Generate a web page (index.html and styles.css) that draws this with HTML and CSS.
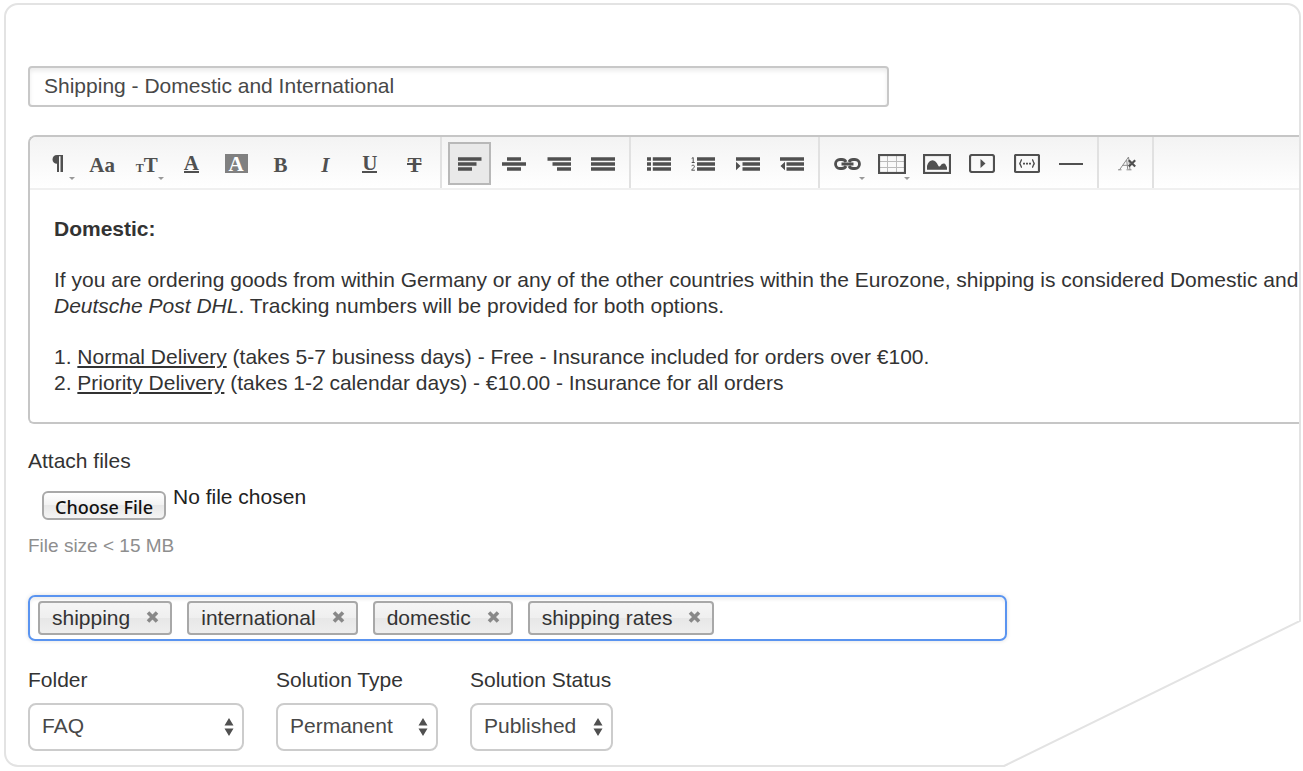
FILE: index.html
```html
<!DOCTYPE html>
<html lang="en">
<head>
<meta charset="utf-8">
<meta name="viewport" content="width=device-width, initial-scale=1">
<title>Edit solution</title>
<link rel="stylesheet" href="styles.css">
</head>
<body>
<form class="panel">
  <input class="title-input" type="text" aria-label="Title" value="Shipping - Domestic and International">

  <section class="editor">
    <div class="toolbar" role="toolbar" aria-label="Formatting">
      <div class="group group-text">
        <button type="button" class="tool has-menu" aria-label="Paragraph"><svg width="12" height="17" viewBox="0 0 12 17"><path d="M11 0H5C2.200 0 .5 1.900 .5 4.500S2.400 8.700 5 8.700V17h2V1.300h1.500V17H11z"/></svg></button>
        <button type="button" class="tool" aria-label="Font family"><span class="glyph">Aa</span></button>
        <button type="button" class="tool has-menu" aria-label="Font size"><span class="glyph"><small class="glyph-small">T</small>T</span></button>
        <button type="button" class="tool" aria-label="Text color"><span class="glyph glyph-line">A</span></button>
        <button type="button" class="tool" aria-label="Background color"><span class="glyph glyph-box">A</span></button>
        <button type="button" class="tool" aria-label="Bold"><span class="glyph">B</span></button>
        <button type="button" class="tool" aria-label="Italic"><span class="glyph glyph-italic">I</span></button>
        <button type="button" class="tool" aria-label="Underline"><span class="glyph glyph-line">U</span></button>
        <button type="button" class="tool" aria-label="Strikethrough"><span class="glyph glyph-strike">T</span></button>
      </div>
      <div class="group group-four">
        <button type="button" class="tool active" aria-label="Align left" aria-pressed="true"><svg width="24" height="14" viewBox="0 0 24 14"><path d="M0 .3h23.500v3.400H0zM0 5.300h18.500v3.400H0zM0 10.300h14v3.400H0z"/></svg></button>
        <button type="button" class="tool" aria-label="Align center"><svg width="24" height="14" viewBox="0 0 24 14"><path d="M5 .3h14v3.400H5zM0 5.300h24v3.400H0zM5 10.300h14v3.400H5z"/></svg></button>
        <button type="button" class="tool" aria-label="Align right"><svg width="24" height="14" viewBox="0 0 24 14"><path d="M.5 .3H24v3.400H.5zM5.500 5.300H24v3.400H5.500zM10 10.300h14v3.400H10z"/></svg></button>
        <button type="button" class="tool" aria-label="Justify"><svg width="24" height="14" viewBox="0 0 24 14"><path d="M0 .3h24v3.400H0zM0 5.300h24v3.400H0zM0 10.300h24v3.400H0z"/></svg></button>
      </div>
      <div class="group group-four">
        <button type="button" class="tool" aria-label="Bulleted list"><svg width="24" height="14" viewBox="0 0 24 14"><path d="M0 .3h4v3.400H0zM0 5.300h4v3.400H0zM0 10.300h4v3.400H0zM5.800 .3H24v3.400H5.800zM5.800 5.300H24v3.400H5.800zM5.800 10.300H24v3.400H5.800z"/></svg></button>
        <button type="button" class="tool" aria-label="Numbered list"><svg width="24" height="14" viewBox="0 0 24 14"><path d="M6 .3h18v3.400H6zM6 5.300h18v3.400H6zM6 10.300h18v3.400H6z"/><path class="thin" d="M.7 1.500L2.200 .5V5.500M.7 5.500h3M.5 9.200C1 7.700 3.600 7.900 3.400 9.500C3.200 10.800 1.500 11.700 .6 13.200H3.900"/></svg></button>
        <button type="button" class="tool" aria-label="Indent"><svg width="24" height="14" viewBox="0 0 24 14"><path d="M0 .3h24v3.400H0zM6.500 5.300H24v3.400H6.500zM6.500 10.300H24v3.400H6.500zM0 4.800L4.500 9 0 13.200z"/></svg></button>
        <button type="button" class="tool" aria-label="Outdent"><svg width="24" height="14" viewBox="0 0 24 14"><path d="M0 .3h24v3.400H0zM6.500 5.300H24v3.400H6.500zM6.500 10.300H24v3.400H6.500zM5 4.800L.5 9 5 13.200z"/></svg></button>
      </div>
      <div class="group group-insert">
        <button type="button" class="tool has-menu" aria-label="Link"><svg width="27" height="12" viewBox="0 0 27 12"><path class="stroke link" d="M12 4C11 2 9.500 1.500 8 1.500H6A4.500 4.500 0 0 0 6 10.500H8C9.500 10.500 11 10 12 8M15 4C16 2 17.500 1.500 19 1.500H21A4.500 4.500 0 0 1 21 10.500H19C17.500 10.500 16 10 15 8"/><path class="stroke link" d="M7.500 6H19.500"/></svg></button>
        <button type="button" class="tool has-menu" aria-label="Table"><svg width="28" height="20" viewBox="0 0 28 20"><path class="pale" d="M9.500 2V18M18.500 2V18M2 7.500H26M2 13.500H26"/><rect class="stroke" x="1" y="1" width="26" height="18"/></svg></button>
        <button type="button" class="tool" aria-label="Image"><svg width="28" height="20" viewBox="0 0 28 20"><rect class="stroke" x="1" y="1" width="26" height="18"/><path d="M4 15.800V12C5 8.500 7 6.300 9.500 6.300S13.800 8.500 15 11.200C16 13 16.500 12.500 17.500 11.800C19 9.200 22 8.700 23 11.500C23.600 13 24 12.500 24 14V15.800z"/></svg></button>
        <button type="button" class="tool" aria-label="Video"><svg width="26" height="19" viewBox="0 0 26 19"><rect class="stroke" x="1" y="1" width="24" height="17" rx="2"/><path d="M11.500 5L16.500 9.500L11.500 14z"/></svg></button>
        <button type="button" class="tool" aria-label="Code snippet"><svg width="26" height="20" viewBox="0 0 26 20"><rect class="stroke" x="1" y="1" width="24" height="17" rx="1"/><path class="mid" d="M8 5.700C6.300 5.700 7.300 9 5.300 9.500C7.300 10 6.300 13.300 8 13.300M18 5.700C19.700 5.700 18.700 9 20.700 9.500C18.700 10 19.700 13.300 18 13.300"/><path d="M9 8.700h2v1.800H9zM12 8.700h2v1.800h-2zM15 8.700h2v1.800h-2z"/></svg></button>
        <button type="button" class="tool" aria-label="Horizontal line"><svg width="24" height="2" viewBox="0 0 24 2"><path d="M0 0h24v2H0z"/></svg></button>
      </div>
      <div class="group group-clear">
        <button type="button" class="tool" aria-label="Clear formatting"><svg width="20" height="15" viewBox="0 0 20 15"><path class="outline" d="M1 13.800H4.500M2.500 13.800L11.500 1L13 13.800M9.500 13.800H14.500M6 9.300H12M9.700 4L10.700 13"/><path class="stroke" d="M11.800 4.200L18.200 10.500M18.200 4.200L11.800 10.500"/></svg></button>
      </div>
    </div>
    <div class="content">
      <p><b>Domestic:</b></p>
      <p>If you are ordering goods from within Germany or any of the other countries within the Eurozone, shipping is considered Domestic and<br><i>Deutsche Post DHL</i>. Tracking numbers will be provided for both options.</p>
      <p>1. <u>Normal Delivery</u> (takes 5-7 business days) - Free - Insurance included for orders over €100.<br>2. <u>Priority Delivery</u> (takes 1-2 calendar days) - €10.00 - Insurance for all orders</p>
    </div>
  </section>

  <div class="attach">
    <label for="file">Attach files</label>
    <div class="file-row">
      <input id="file" class="file" type="file">
      <span>No file chosen</span>
    </div>
    <p class="hint">File size &lt; 15 MB</p>
  </div>

  <div class="tags">
    <span class="tag">shipping <button type="button" class="remove" aria-label="Remove shipping"><svg width="13" height="12" viewBox="0 0 13 12"><path d="M2 1.500L11 10.500M11 1.500L2 10.500"/></svg></button></span>
    <span class="tag">international <button type="button" class="remove" aria-label="Remove international"><svg width="13" height="12" viewBox="0 0 13 12"><path d="M2 1.500L11 10.500M11 1.500L2 10.500"/></svg></button></span>
    <span class="tag">domestic <button type="button" class="remove" aria-label="Remove domestic"><svg width="13" height="12" viewBox="0 0 13 12"><path d="M2 1.500L11 10.500M11 1.500L2 10.500"/></svg></button></span>
    <span class="tag">shipping rates <button type="button" class="remove" aria-label="Remove shipping rates"><svg width="13" height="12" viewBox="0 0 13 12"><path d="M2 1.500L11 10.500M11 1.500L2 10.500"/></svg></button></span>
    <input class="tag-input" type="text" aria-label="Add tag">
  </div>

  <div class="fields">
    <div class="field field-folder">
      <label for="folder">Folder</label>
      <div class="select-wrap"><select id="folder"><option>FAQ</option></select><svg class="arrows" width="10" height="18" viewBox="0 0 10 18"><path d="M5 0L9.500 7.500H.5zM5 18L.5 10.500H9.500z"/></svg></div>
    </div>
    <div class="field field-type">
      <label for="type">Solution Type</label>
      <div class="select-wrap"><select id="type"><option>Permanent</option></select><svg class="arrows" width="10" height="18" viewBox="0 0 10 18"><path d="M5 0L9.500 7.500H.5zM5 18L.5 10.500H9.500z"/></svg></div>
    </div>
    <div class="field field-status">
      <label for="status">Solution Status</label>
      <div class="select-wrap"><select id="status"><option>Published</option></select><svg class="arrows" width="10" height="18" viewBox="0 0 10 18"><path d="M5 0L9.500 7.500H.5zM5 18L.5 10.500H9.500z"/></svg></div>
    </div>
  </div>

  <svg class="corner" width="299" height="147" viewBox="0 0 299 147" aria-hidden="true"><path class="corner-fill" d="M2 147L299 0V147z"/><path class="corner-line" d="M0 146H2L298 1V0"/></svg>
</form>
</body>
</html>
```

FILE: styles.css
```css
* {
  box-sizing: border-box;
}

body {
  margin: 0;
  padding: 3px 2px 4px 4px;
  background: #fff;
  color: #333;
  font: 21px/26px "Liberation Sans", Arial, sans-serif;
}

p {
  margin: 0;
}

input,
select,
button {
  font: inherit;
  color: inherit;
}

.panel {
  position: relative;
  padding: 61px 0 14px 22px;
  border: 2px solid #e3e3e3;
  border-radius: 14px;
}

.title-input {
  display: block;
  width: 100%;
  max-width: 861px;
  height: 41px;
  padding: 0 14px 2px;
  border: 2px solid #c8c8c8;
  border-radius: 4px;
  box-shadow: inset 0 3px 4px #ececec;
  color: #484848;
}

.editor {
  margin-top: 28px;
  border: 2px solid #c6c6c6;
  border-right: 0;
  border-radius: 8px 0 0 6px;
  overflow: hidden;
}

.toolbar {
  display: flex;
  height: 53px;
  border-bottom: 2px solid #f0f0f0;
  background: linear-gradient(#f3f3f3, #fff);
}

.group {
  display: flex;
  flex: none;
  align-items: center;
  justify-content: space-between;
  padding: 2px 4px 0 6px;
  border-right: 2px solid #e1e1e1;
}

.group-text {
  width: 412px;
}

.group-four {
  width: 189px;
}

.group-insert {
  width: 279px;
}

.tool {
  position: relative;
  display: flex;
  flex: none;
  align-items: center;
  justify-content: center;
  width: 43px;
  height: 43px;
  padding: 0;
  border: 0;
  background: none;
  color: #505050;
  fill: #505050;
}

.tool.active {
  border: 2px solid #b8b8b8;
  background: #e9e9e9;
}

.has-menu::after {
  content: "";
  position: absolute;
  right: 4px;
  bottom: 5px;
  border: 3px solid transparent;
  border-top-color: #999;
  border-bottom: 0;
}

.stroke {
  fill: none;
  stroke: #505050;
  stroke-width: 2.2;
}

.link {
  stroke-width: 2.8;
}

.mid {
  fill: none;
  stroke: #505050;
  stroke-width: 1.4;
}

.thin {
  fill: none;
  stroke: #505050;
  stroke-width: 1;
}

.pale {
  fill: none;
  stroke: #bbb;
  stroke-width: 1;
}

.outline {
  fill: none;
  stroke: #8a8a8a;
  stroke-width: 1;
}

.glyph {
  padding-top: 2px;
  font: bold 21px/20px "Liberation Serif", "Times New Roman", serif;
}

.glyph-small {
  font-size: 12px;
  line-height: 0;
}

.glyph-italic {
  font-style: italic;
}

.glyph-line {
  height: 19px;
  border-bottom: 2px solid #505050;
  line-height: 15px;
}

.glyph-box {
  width: 23px;
  height: 19px;
  padding: 0;
  background: #808080;
  color: #fff;
}

.glyph-strike {
  background: linear-gradient(#505050, #505050) center / 100% 2px no-repeat;
}

.content {
  display: grid;
  gap: 25px;
  padding: 26px 0 26px 24px;
  white-space: nowrap;
}

.attach {
  padding-top: 24px;
}

.file-row {
  display: flex;
  gap: 7px;
  height: 36px;
  margin: 10px 0 13px 14px;
  color: #222;
}

.file {
  align-self: flex-end;
  width: 124px;
  height: 29px;
  color: transparent;
}

.file::file-selector-button {
  width: 124px;
  height: 29px;
  margin: 0;
  padding: 2px 0 0;
  border: 2px solid #a9a9a9;
  border-radius: 6px;
  background: linear-gradient(#fff, #f2f2f2 50%, #e8e8e8 50%, #f4f4f4);
  color: #111;
  font: 500 18px/22px "Noto Sans", sans-serif;
}

.hint {
  color: #8e8e8e;
  font-size: 19px;
}

.tags {
  display: flex;
  align-items: center;
  gap: 15px;
  max-width: 979px;
  height: 46px;
  margin-top: 36px;
  padding: 0 8px;
  border: 2px solid #5a94f0;
  border-radius: 7px;
  box-shadow: 0 0 4px #ddd, inset 0 3px 3px #f0f0f0;
}

.tag {
  display: flex;
  flex: none;
  align-items: center;
  gap: 16px;
  height: 34px;
  padding: 0 11px 0 12px;
  border: 2px solid #a8a8a8;
  border-radius: 4px;
  background: linear-gradient(#f5f5f5, #efefef 50%, #e7e7e7 50%, #eee);
}

.remove {
  display: flex;
  padding: 0 0 3px;
  border: 0;
  background: none;
  fill: none;
  stroke: #888;
  stroke-width: 3.6;
}

.tag-input {
  flex: 1;
  min-width: 0;
  border: 0;
  outline: 0;
  background: none;
}

.fields {
  display: flex;
  gap: 32px;
  margin-top: 26px;
}

.field {
  display: grid;
  gap: 10px;
}

.field-folder {
  width: 216px;
}

.field-type {
  width: 162px;
}

.field-status {
  width: 143px;
}

.select-wrap {
  position: relative;
}

select {
  display: block;
  width: 100%;
  height: 48px;
  padding: 0 12px 2px;
  border: 2px solid #ccc;
  border-radius: 8px;
  appearance: none;
  background: #fff;
  color: #484848;
}

.arrows {
  position: absolute;
  top: 15px;
  right: 10px;
  fill: #505050;
  pointer-events: none;
}

.corner {
  position: absolute;
  right: -2px;
  bottom: -2px;
}

.corner-fill {
  fill: #fff;
}

.corner-line {
  fill: none;
  stroke: #e3e3e3;
  stroke-width: 2;
}
```
